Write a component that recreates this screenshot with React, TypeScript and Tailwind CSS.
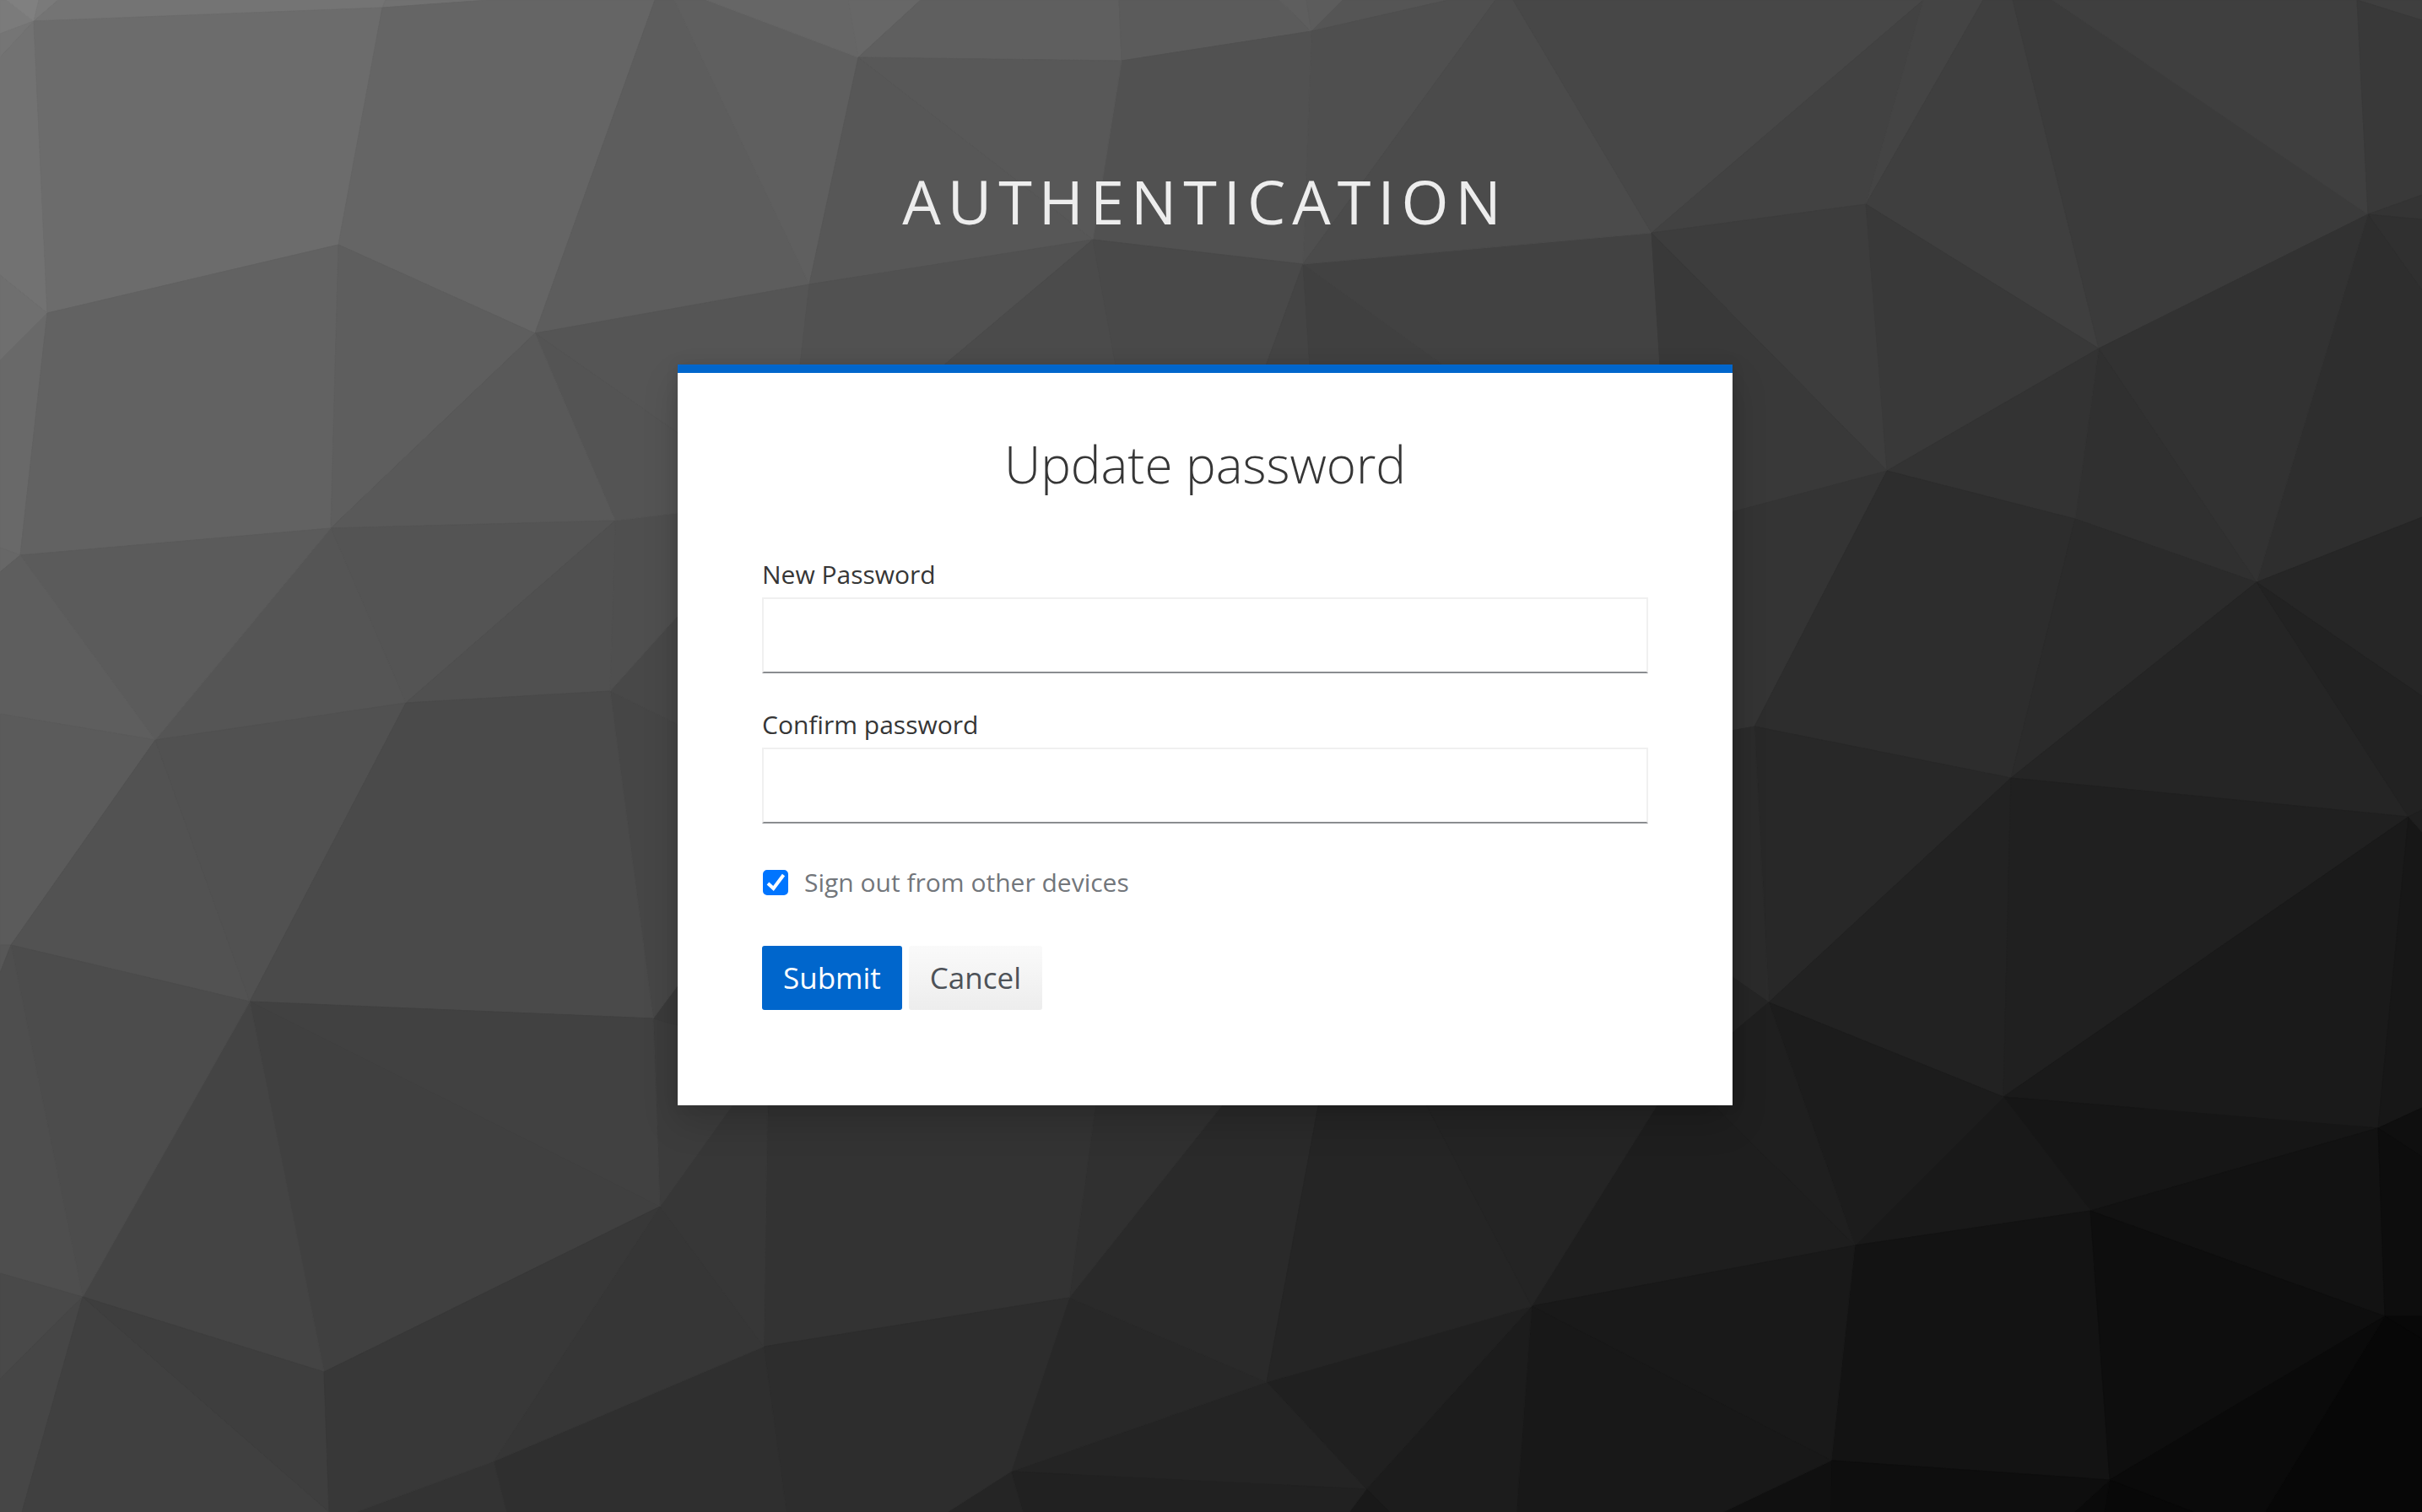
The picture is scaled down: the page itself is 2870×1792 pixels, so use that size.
import { useState, type ReactNode } from "react";

type Facet = [shade: string, points: string];

const facets: Facet[] = [
  ["#7b7b7b", "0,0 8,0 40,25 0,40"],
  ["#808080", "8,0 46,0 40,25"],
  ["#7a7a7a", "46,0 69,0 40,25"],
  ["#757575", "0,40 40,25 0,68"],
  ["#727272", "0,68 40,25 56,371 0,326"],
  ["#747474", "69,0 457,0 453,9 40,25"],
  ["#6c6c6c", "40,25 453,9 401,290 56,371"],
  ["#717171", "457,0 579,0 453,9"],
  ["#656565", "453,9 579,0 776,0 634,395 401,290"],
  ["#6f6f6f", "0,326 56,371 0,427"],
  ["#696969", "0,427 56,371 24,658 0,649"],
  ["#676767", "0,649 24,658 0,678"],
  ["#626262", "56,371 401,290 392,626 24,658"],
  ["#5e5e5e", "401,290 634,395 392,626"],
  ["#5d5d5d", "634,395 776,0 799,0 959,337"],
  ["#5f5f5f", "799,0 837,0 1017,68 959,337"],
  ["#666666", "837,0 1005,0 1017,68"],
  ["#676767", "1005,0 1091,0 1017,68"],
  ["#5f5f5f", "1017,68 1091,0 1326,0 1329,72"],
  ["#5b5b5b", "1329,72 1326,0 1516,0 1554,37"],
  ["#5e5e5e", "1554,37 1516,0 1548,0"],
  ["#5c5c5c", "1554,37 1548,0 1591,0"],
  ["#555555", "1554,37 1591,0 1716,0"],
  ["#4f4f4f", "1554,37 1716,0 1772,0 1544,313"],
  ["#515151", "1554,37 1544,313 1295,284 1329,72"],
  ["#585858", "1017,68 1329,72 1295,284"],
  ["#575757", "1017,68 1295,284 959,337"],
  ["#555555", "634,395 959,337 946,450 940,600 820,525"],
  ["#515151", "959,337 1295,284 1098,450 946,450"],
  ["#4b4b4b", "1295,284 1325,450 1098,450"],
  ["#494949", "1295,284 1544,313 1494,450 1325,450"],
  ["#444444", "1544,313 1494,450 1553,450"],
  ["#404040", "1544,313 1553,450 1734,450"],
  ["#424242", "1544,313 1734,450 1968,450 1957,276"],
  ["#4b4b4b", "1544,313 1772,0 1793,0 1957,276"],
  ["#474747", "1793,0 2279,0 1957,276"],
  ["#424242", "1957,276 2279,0 2211,242"],
  ["#444444", "2279,0 2350,0 2211,242"],
  ["#3f3f3f", "2211,242 2350,0 2385,0 2487,413"],
  ["#3b3b3b", "2385,0 2432,0 2806,254 2487,413"],
  ["#3f3f3f", "2432,0 2793,0 2806,254"],
  ["#3f3f3f", "2793,0 2870,0 2870,24"],
  ["#393939", "2793,0 2870,24 2870,231 2806,254"],
  ["#343434", "2806,254 2870,231 2870,260"],
  ["#303030", "2806,254 2870,260 2870,344"],
  ["#2e2e2e", "2806,254 2870,344 2870,613 2674,690"],
  ["#3d3d3d", "1957,276 2211,242 2236,558"],
  ["#393939", "2211,242 2487,413 2236,558"],
  ["#393939", "1957,276 2236,558 2040,610 1968,450"],
  ["#323232", "2487,413 2806,254 2674,690"],
  ["#303030", "2487,413 2674,690 2459,615"],
  ["#333333", "2487,413 2459,615 2236,558"],
  ["#343434", "2236,558 2040,610 2040,868 2079,861"],
  ["#2d2d2d", "2236,558 2459,615 2383,922 2079,861"],
  ["#2b2b2b", "2459,615 2674,690 2383,922"],
  ["#252525", "2674,690 2854,968 2383,922"],
  ["#262626", "2674,690 2870,613 2870,825"],
  ["#222222", "2674,690 2870,825 2870,960 2854,968"],
  ["#282828", "2079,861 2383,922 2096,1188"],
  ["#2b2b2b", "2040,868 2079,861 2096,1188 2040,1149"],
  ["#252525", "2096,1188 2040,1149 2040,1235"],
  ["#222222", "2383,922 2374,1300 2096,1188"],
  ["#202020", "2383,922 2854,968 2374,1300"],
  ["#1a1a1a", "2374,1300 2854,968 2818,1337"],
  ["#171717", "2854,968 2870,986 2870,1313 2818,1337"],
  ["#1f1f1f", "2854,968 2870,960 2870,986"],
  ["#161616", "2374,1300 2818,1337 2477,1435"],
  ["#191919", "2374,1300 2477,1435 2198,1476"],
  ["#1c1c1c", "2096,1188 2374,1300 2198,1476"],
  ["#1f1f1f", "2096,1188 2198,1476 2010,1290 2040,1235"],
  ["#1e1e1e", "2198,1476 1815,1548 1976,1290 2010,1290"],
  ["#131313", "2198,1476 2477,1435 2500,1754 2170,1731"],
  ["#121212", "2477,1435 2818,1337 2826,1560"],
  ["#0e0e0e", "2477,1435 2826,1560 2500,1754"],
  ["#0f0f0f", "2818,1337 2870,1313 2870,1371"],
  ["#0d0d0d", "2818,1337 2870,1371 2870,1560 2826,1560"],
  ["#080808", "2826,1560 2870,1560 2870,1587"],
  ["#070707", "2826,1560 2870,1587 2870,1792 2684,1792"],
  ["#0a0a0a", "2826,1560 2684,1792 2599,1792 2500,1754"],
  ["#080808", "2500,1754 2599,1792 2494,1792"],
  ["#0a0a0a", "2500,1754 2494,1792 2458,1792"],
  ["#0e0e0e", "2170,1731 2500,1754 2458,1792 2169,1792"],
  ["#101010", "2170,1731 2169,1792 2042,1792"],
  ["#191919", "1815,1548 2198,1476 2170,1731"],
  ["#181818", "1815,1548 2170,1731 2042,1792 1797,1792"],
  ["#1c1c1c", "1815,1548 1797,1792 1647,1792 1619,1765"],
  ["#191919", "1619,1765 1647,1792 1599,1792"],
  ["#202020", "1501,1638 1815,1548 1619,1765"],
  ["#242424", "1501,1638 1619,1765 1198,1744"],
  ["#212121", "1198,1744 1619,1765 1599,1792 1212,1792"],
  ["#252525", "1198,1744 1212,1792 1123,1792"],
  ["#282828", "1267,1538 1501,1638 1198,1744"],
  ["#2a2a2a", "1267,1538 1464,1290 1566,1290 1501,1638"],
  ["#252525", "1501,1638 1566,1290 1680,1290 1815,1548"],
  ["#242424", "1815,1548 1680,1290 1976,1290"],
  ["#303030", "1267,1538 1301,1290 1464,1290"],
  ["#333333", "905,1596 1267,1538 1301,1290 910,1290"],
  ["#2d2d2d", "905,1596 1267,1538 1198,1744 1123,1792 932,1792"],
  ["#2f2f2f", "905,1596 932,1792 600,1792 585,1732"],
  ["#333333", "585,1732 600,1792 422,1792"],
  ["#363636", "782,1430 905,1596 585,1732"],
  ["#373737", "782,1430 905,1596 910,1290 882,1290"],
  ["#3c3c3c", "782,1430 882,1290 820,1220 774,1207"],
  ["#3a3a3a", "774,1207 820,1145 820,1220"],
  ["#464646", "723,819 820,867 820,1145 774,1207"],
  ["#484848", "723,819 820,711 820,867"],
  ["#4f4f4f", "729,617 820,606 820,711 723,819"],
  ["#545454", "634,395 820,525 820,606 729,617"],
  ["#595959", "634,395 729,617 392,626"],
  ["#545454", "392,626 729,617 481,833"],
  ["#505050", "729,617 723,819 481,833"],
  ["#555555", "392,626 481,833 184,877"],
  ["#5b5b5b", "24,658 392,626 184,877"],
  ["#5e5e5e", "24,658 184,877 0,846 0,678"],
  ["#5b5b5b", "184,877 0,846 0,1120 13,1120"],
  ["#575757", "13,1120 0,1120 0,1153"],
  ["#525252", "184,877 296,1187 13,1120"],
  ["#515151", "184,877 481,833 296,1187"],
  ["#4a4a4a", "481,833 723,819 774,1207 296,1187"],
  ["#414141", "296,1187 774,1207 782,1430"],
  ["#404040", "296,1187 782,1430 384,1626"],
  ["#444444", "296,1187 384,1626 98,1537"],
  ["#4c4c4c", "13,1120 296,1187 98,1537"],
  ["#4e4e4e", "13,1120 98,1537 0,1509 0,1153"],
  ["#494949", "98,1537 0,1509 0,1634"],
  ["#464646", "98,1537 0,1634 0,1792 26,1792"],
  ["#404040", "98,1537 26,1792 390,1792"],
  ["#3e3e3e", "98,1537 390,1792 384,1626"],
  ["#383838", "384,1626 782,1430 585,1732 422,1792 390,1792"],
];

function Backdrop() {
  return (
    <svg
      className="absolute inset-0 h-full w-full"
      viewBox="0 0 2870 1792"
      preserveAspectRatio="xMidYMid slice"
      aria-hidden="true"
    >
      {facets.map(([shade, points]) => (
        <polygon key={points} points={points} fill={shade} stroke={shade} strokeWidth="1" strokeLinejoin="round" />
      ))}
    </svg>
  );
}

function PasswordField({ id, children }: { id: string; children: ReactNode }) {
  return (
    <div className="flex flex-col gap-1">
      <label htmlFor={id} className="text-[30px] leading-[46px] text-[#363636]">
        {children}
      </label>
      <input
        id={id}
        type="password"
        className="h-[90px] w-full border-2 border-[#f0f0f0] border-b-[#8a8d90] bg-white px-5 text-[36px] outline-none"
      />
    </div>
  );
}

export default function App() {
  const [signOut, setSignOut] = useState(true);

  return (
    <div className="relative isolate min-h-screen overflow-hidden bg-[#2b2b2b] font-['Open_Sans',sans-serif]">
      <Backdrop />
      <div className="relative flex flex-col items-center pr-3.5">
        <header className="px-6 pt-[188px] pb-[144px] text-center text-[72px] leading-[100px] tracking-[8px] text-[#ededed] uppercase">
          Authentication
        </header>
        <main className="w-full max-w-[1250px] border-t-10 border-[#0066cc] bg-white px-[100px] pt-[68px] pb-[113px] shadow-[0_20px_40px_rgba(3,3,3,0.16),0_0_15px_rgba(3,3,3,0.08)]">
          <h1 className="text-center text-[60px] leading-[80px] font-light text-[#363636]">Update password</h1>
          <form className="mt-[68px]" onSubmit={(event) => event.preventDefault()}>
            <div className="flex flex-col gap-[38px]">
              <PasswordField id="password-new">New Password</PasswordField>
              <PasswordField id="password-confirm">Confirm password</PasswordField>
            </div>
            <label className="mt-[45px] flex items-center gap-[19px] pl-px text-[30px] leading-[50px] text-[#72767b]">
              <span className="grid size-[30px]">
                <input
                  type="checkbox"
                  checked={signOut}
                  onChange={(event) => setSignOut(event.target.checked)}
                  className="peer [grid-area:1/1] appearance-none rounded-[5px] border-2 border-[#767676] bg-white checked:border-[#0075ff] checked:bg-[#0075ff]"
                />
                <svg
                  viewBox="0 0 30 30"
                  className="pointer-events-none invisible [grid-area:1/1] peer-checked:visible"
                  fill="none"
                  stroke="white"
                  strokeWidth="4"
                  aria-hidden="true"
                >
                  <path d="M6 16 L12.5 22 L24.5 6" />
                </svg>
              </span>
              Sign out from other devices
            </label>
            <div className="mt-[50px] flex gap-2">
              <button type="submit" className="h-[76px] rounded-[3px] bg-[#0066cc] px-[25px] text-[35px] leading-[50px] text-white">
                Submit
              </button>
              <button
                type="button"
                className="h-[76px] rounded-[3px] bg-linear-to-b from-[#fafafa] to-[#ededed] px-[25px] text-[35px] leading-[50px] text-[#4d5258]"
              >
                Cancel
              </button>
            </div>
          </form>
        </main>
      </div>
    </div>
  );
}
